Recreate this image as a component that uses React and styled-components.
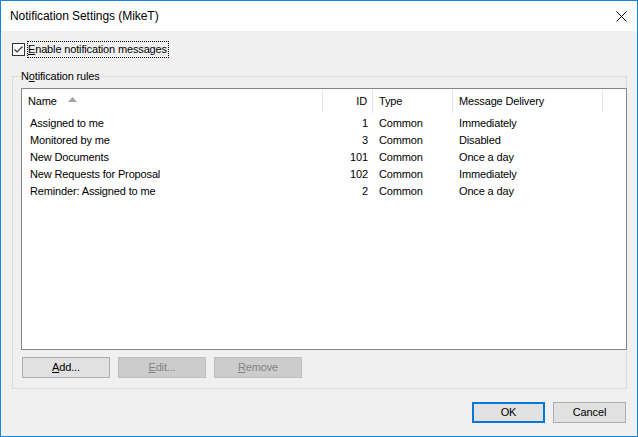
import React from "react";
import styled, { createGlobalStyle } from "styled-components";

const Global = createGlobalStyle`
  html, body { margin: 0; padding: 0; background: #ffffff; }
  body {
    font-family: "Liberation Sans", Arial, sans-serif;
    font-size: 11px;
    color: #000;
  }
  * { box-sizing: border-box; }
`;

const Window = styled.div`
  width: 638px;
  height: 437px;
  border: 1px solid #1883d7;
  display: flex;
  flex-direction: column;
  background: #f0f0f0;
`;

const TitleBar = styled.div`
  height: 30px;
  flex: none;
  background: #ffffff;
  display: flex;
  align-items: center;
  justify-content: space-between;
  padding: 0 10px 1px 9px;
`;

const Title = styled.span`
  font-size: 12px;
  letter-spacing: -0.05px;
  white-space: nowrap;
`;

const Close = styled.svg`
  width: 11px;
  height: 11px;
  display: block;
  margin-top: 1px;
`;

const Body = styled.div`
  flex: 1;
  display: flex;
  flex-direction: column;
  padding: 10px 10px 13px 11px;
  letter-spacing: -0.15px;
`;

const CheckRow = styled.label`
  display: flex;
  align-items: center;
  height: 17px;
  margin-bottom: 10px;
`;

const Box = styled.span`
  width: 13px;
  height: 13px;
  border: 1px solid #333333;
  background: #ffffff;
  display: flex;
  align-items: center;
  justify-content: center;
  flex: none;
`;

const FocusLabel = styled.span`
  margin-left: 2px;
  height: 17px;
  line-height: 15px;
  padding: 0 1px 0 0;
  border: 1px dotted #000;
  white-space: nowrap;
`;

const Group = styled.fieldset`
  margin: 0;
  height: 321px;
  border: 1px solid #dcdcdc;
  padding: 4px 0 10px 8px;
  min-width: 0;
`;

const Legend = styled.legend`
  padding: 0 1px 0 0;
  margin-left: 0;
  line-height: 16px;
  height: 16px;
`;

const GroupInner = styled.div`
  height: 290px;
  display: flex;
  flex-direction: column;
`;

const List = styled.div`
  flex: 1;
  border: 1px solid #828790;
  background: #ffffff;
  margin-right: -1px;
  display: flex;
  flex-direction: column;
`;

const Columns = styled.div`
  display: grid;
  grid-template-columns: 301px 50px 80px 150px 1fr;
`;

const Header = styled(Columns)`
  height: 24px;
  margin-bottom: 2px;
`;

const HeadCell = styled.div`
  border-right: ${(p) => (p.$last ? "none" : "1px solid #e5e5e5")};
  margin-top: 1px;
  display: flex;
  align-items: center;
  justify-content: ${(p) => (p.$right ? "flex-end" : "flex-start")};
  padding: ${(p) => (p.$right ? "0 5px 1px 0" : "0 0 1px 6px")};
  white-space: nowrap;
`;

const SortArrow = styled.svg`
  width: 9px;
  height: 5px;
  margin-left: 11px;
  margin-top: -4px;
  display: block;
`;

const Row = styled(Columns)`
  height: 17px;
  line-height: 17px;
`;

const Cell = styled.div`
  white-space: nowrap;
  text-align: ${(p) => (p.$right ? "right" : "left")};
  padding: ${(p) => (p.$right ? "0 5px 0 0" : p.$first ? "0 0 0 8px" : "0 0 0 6px")};
`;

const ButtonRow = styled.div`
  display: flex;
  gap: 8px;
  margin-top: 7px;
  padding-left: 1px;
`;

const Button = styled.button`
  font: inherit;
  letter-spacing: inherit;
  width: ${(p) => p.$w || 88}px;
  height: 21px;
  padding: 0 0 1px;
  border: ${(p) =>
    p.$default
      ? "2px solid #0078d7"
      : p.disabled
      ? "1px solid #bfbfbf"
      : "1px solid #adadad"};
  background: ${(p) => (p.disabled ? "#cccccc" : "#e1e1e1")};
  color: ${(p) => (p.disabled ? "#838383" : "#000")};
  display: flex;
  align-items: center;
  justify-content: center;
`;

const Footer = styled.div`
  display: flex;
  justify-content: flex-end;
  gap: 8px;
  margin-top: 13px;
  margin-right: 1px;
`;

const rows = [
  ["Assigned to me", "1", "Common", "Immediately"],
  ["Monitored by me", "3", "Common", "Disabled"],
  ["New Documents", "101", "Common", "Once a day"],
  ["New Requests for Proposal", "102", "Common", "Immediately"],
  ["Reminder: Assigned to me", "2", "Common", "Once a day"],
];

export default function App() {
  return (
    <>
      <Global />
      <Window>
        <TitleBar>
          <Title>Notification Settings (MikeT)</Title>
          <Close viewBox="0 0 11 11">
            <path d="M0.5 0.5 L10.5 10.5 M10.5 0.5 L0.5 10.5" stroke="#000" strokeWidth="1" fill="none" />
          </Close>
        </TitleBar>
        <Body>
          <CheckRow>
            <Box>
              <svg width="11" height="11" viewBox="0 0 11 11">
                <path d="M1.5 5.5 L4 8 L9.5 2.5" stroke="#333" strokeWidth="1.2" fill="none" />
              </svg>
            </Box>
            <FocusLabel>
              <u>E</u>nable notification messages
            </FocusLabel>
          </CheckRow>
          <Group>
            <Legend>
              N<u>o</u>tification rules
            </Legend>
            <GroupInner>
              <List>
                <Header>
                  <HeadCell>
                    Name
                    <SortArrow viewBox="0 0 9 5">
                      <path d="M0 5 L4.5 0 L9 5 Z" fill="#a3a3a3" />
                    </SortArrow>
                  </HeadCell>
                  <HeadCell $right>ID</HeadCell>
                  <HeadCell>Type</HeadCell>
                  <HeadCell>Message Delivery</HeadCell>
                  <HeadCell $last />
                </Header>
                {rows.map((r) => (
                  <Row key={r[0]}>
                    <Cell $first>{r[0]}</Cell>
                    <Cell $right>{r[1]}</Cell>
                    <Cell>{r[2]}</Cell>
                    <Cell>{r[3]}</Cell>
                    <Cell />
                  </Row>
                ))}
              </List>
              <ButtonRow>
                <Button>
                  <u>A</u>dd...
                </Button>
                <Button disabled>
                  <u>E</u>dit...
                </Button>
                <Button disabled>
                  <u>R</u>emove
                </Button>
              </ButtonRow>
            </GroupInner>
          </Group>
          <Footer>
            <Button $default $w={73}>OK</Button>
            <Button $w={73}>Cancel</Button>
          </Footer>
        </Body>
      </Window>
    </>
  );
}
